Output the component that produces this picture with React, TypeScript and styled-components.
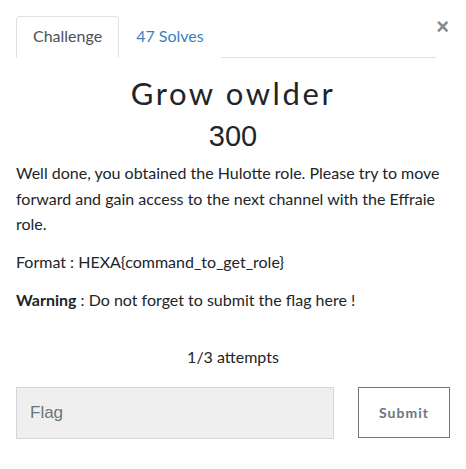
import React from "react";
import styled, { createGlobalStyle } from "styled-components";

const Global = createGlobalStyle`
  html, body { margin: 0; padding: 0; background: #fff; }
  body { font-family: Lato, "Open Sans", sans-serif; color: #212529; }
  * { box-sizing: border-box; }
`;

const Modal = styled.div`
  position: relative;
  width: 466px;
  height: 469px;
  padding: 16px 16px 0 16px;
`;

const Close = styled.button`
  position: absolute;
  top: 16px;
  right: 17px;
  border: 0;
  background: transparent;
  padding: 0;
  font-family: "Liberation Sans", Arial, sans-serif;
  font-size: 22px;
  font-weight: 700;
  line-height: 22px;
  color: #888;
  cursor: pointer;
`;

const Tabs = styled.ul`
  display: flex;
  list-style: none;
  margin: 0;
  padding: 0;
  width: 420px;
  border-bottom: 1px solid #dee2e6;
`;

const Tab = styled.li<{ $active?: boolean }>`
  margin-bottom: -1px;
  padding: 0 16px 0 16px;
  height: 42px;
  display: flex;
  align-items: center;
  padding-bottom: 3px;
  font-size: 16px;
  border: 1px solid ${(p) => (p.$active ? "#dee2e6" : "transparent")};
  border-bottom-color: ${(p) => (p.$active ? "#fff" : "transparent")};
  border-top-left-radius: 4px;
  border-top-right-radius: 4px;
  background: #fff;
  color: ${(p) => (p.$active ? "#495057" : "#3a80c2")};
`;

const Title = styled.h2`
  margin: 16px 0 0;
  text-align: center;
  font-family: Lato, sans-serif;
  font-weight: 400;
  font-size: 31px;
  letter-spacing: 2.6px;
  line-height: 38px;
  color: #212529;
`;

const Value = styled.h3`
  margin: 7px 0 0;
  text-align: center;
  font-family: "Liberation Sans", Arial, sans-serif;
  font-weight: 400;
  font-size: 29px;
  line-height: 34px;
  color: #212529;
`;

const Desc = styled.div`
  margin-top: 7px;
  font-size: 16px;
  line-height: 25.5px;
  color: #212529;
`;

const Para = styled.p`
  margin: 0 0 12.5px;
  &:last-child { margin-bottom: 0; }
`;

const Attempts = styled.div`
  margin-top: 34px;
  text-align: center;
  font-size: 16px;
  line-height: 20px;
  color: #212529;
`;

const FormRow = styled.div`
  display: flex;
  align-items: center;
  gap: 24px;
  margin-top: 20px;
`;

const FlagInput = styled.input`
  width: 318px;
  height: 52px;
  background: #efefef;
  border: 1px solid #d3d7dc;
  padding: 0 13px;
  font-family: "Liberation Sans", Arial, sans-serif;
  font-size: 17px;
  color: #495057;
  outline: none;
  &::placeholder { color: #6c757d; }
`;

const SubmitBtn = styled.button`
  width: 92px;
  height: 51px;
  background: #fff;
  border: 1px solid #6c757d;
  font-family: Lato, sans-serif;
  font-weight: 700;
  font-size: 14px;
  letter-spacing: 1px;
  color: #6c757d;
`;

export default function App() {
  return (
    <>
      <Global />
      <Modal>
        <Close aria-label="Close">×</Close>
        <Tabs>
          <Tab $active>Challenge</Tab>
          <Tab>47 Solves</Tab>
        </Tabs>
        <Title>Grow owlder</Title>
        <Value>300</Value>
        <Desc>
          <Para>
            Well done, you obtained the Hulotte role. Please try to move forward and gain access to the next channel with the Effraie role.
          </Para>
          <Para>Format : HEXA{"{command_to_get_role}"}</Para>
          <Para>
            <strong>Warning</strong> : Do not forget to submit the flag here !
          </Para>
        </Desc>
        <Attempts>1/3 attempts</Attempts>
        <FormRow>
          <FlagInput placeholder="Flag" />
          <SubmitBtn>Submit</SubmitBtn>
        </FormRow>
      </Modal>
    </>
  );
}
